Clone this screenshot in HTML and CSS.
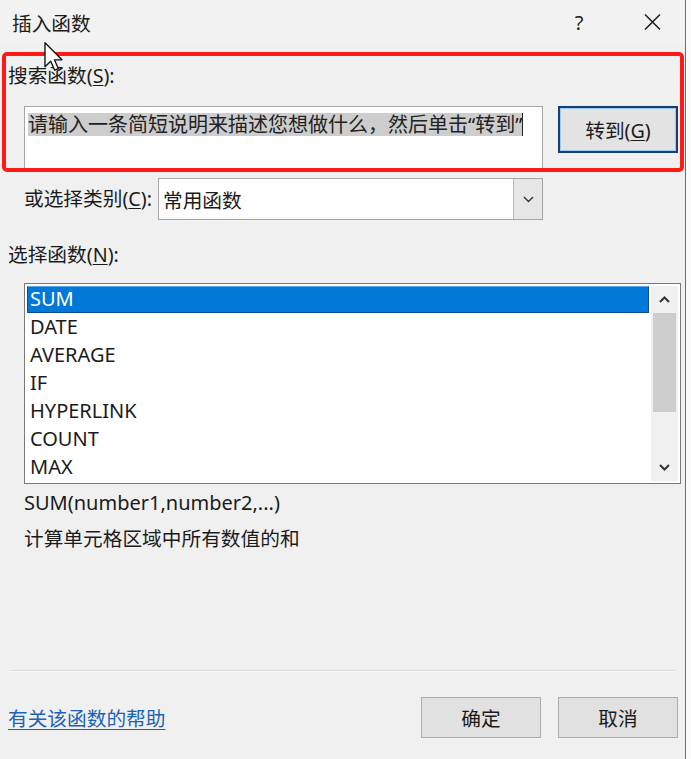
FILE: index.html
```html
<!DOCTYPE html>
<html lang="zh-CN">
<head>
<meta charset="utf-8">
<title>插入函数</title>
<link rel="stylesheet" href="styles.css">
</head>
<body>
<div class="dialog">
  <div class="titlebar">
    <span class="title">插入函数</span>
    <span class="help">?</span>
    <span class="close"><svg width="17" height="16" viewBox="0 0 17 16"><path d="M1 0.5 L16 15.5 M16 0.5 L1 15.5" stroke="#222" stroke-width="1.5" fill="none"/></svg></span>
  </div>

  <div class="label search-label">搜索函数(<u>S</u>):</div>
  <div class="search-row">
    <div class="search-box"><span class="sel">请输入一条简短说明来描述您想做什么，然后单击“转到”</span><span class="caret"></span></div>
    <button class="btn btn-go">转到(<u>G</u>)</button>
  </div>

  <div class="category-row">
    <span class="label cat-label">或选择类别(<u>C</u>):</span>
    <div class="select">
      <span class="select-value">常用函数</span>
      <span class="select-btn"><svg width="11" height="7" viewBox="0 0 11 7"><path d="M1 1 L5.5 5.5 L10 1" stroke="#333" stroke-width="1.4" fill="none"/></svg></span>
    </div>
  </div>

  <div class="label fn-label">选择函数(<u>N</u>):</div>
  <div class="listbox">
    <ul class="items">
      <li class="item selected">SUM</li>
      <li class="item">DATE</li>
      <li class="item">AVERAGE</li>
      <li class="item">IF</li>
      <li class="item">HYPERLINK</li>
      <li class="item">COUNT</li>
      <li class="item">MAX</li>
    </ul>
    <div class="scrollbar">
      <span class="arrow"><svg width="11" height="7" viewBox="0 0 11 7"><path d="M1 6 L5.5 1.5 L10 6" stroke="#333" stroke-width="2" fill="none"/></svg></span>
      <span class="thumb"></span>
      <span class="track"></span>
      <span class="arrow"><svg width="11" height="7" viewBox="0 0 11 7"><path d="M1 1 L5.5 5.5 L10 1" stroke="#333" stroke-width="2" fill="none"/></svg></span>
    </div>
  </div>

  <div class="syntax">SUM(number1,number2,...)</div>
  <div class="desc">计算单元格区域中所有数值的和</div>

  <div class="separator"></div>
  <div class="footer">
    <a class="help-link" href="#">有关该函数的帮助</a>
    <div class="buttons">
      <button class="btn">确定</button>
      <button class="btn">取消</button>
    </div>
  </div>

  <div class="annotation"></div>
  <svg class="cursor" width="20" height="30" viewBox="0 0 13 20"><path d="M0.5 0.5 L0.5 16.5 L4.3 12.8 L7 18.8 L9.4 17.8 L6.8 11.9 L11.8 11.9 Z" fill="#fff" stroke="#111" stroke-width="0.9" stroke-linejoin="round"/></svg>
</div>
</body>
</html>
```

FILE: styles.css
```css
* { box-sizing: border-box; }
html, body { margin: 0; padding: 0; background: #fbfbfb; }
body {
  font-family: "Noto Sans", "Noto Sans CJK SC", sans-serif;
  font-size: 19.7px;
  color: #1b1b1b;
}
.dialog {
  position: relative;
  width: 686px;
  height: 759px;
  background: #f0f0f0;
  border-right: 1px solid #6e6e6e;
  display: flex;
  flex-direction: column;
  padding-bottom: 21px;
  overflow: hidden;
}
.titlebar {
  height: 44px;
  display: flex;
  align-items: center;
  padding-left: 12px;
  background: #f2f2f2;
}
.title { flex: 1; }
.help { width: 20px; text-align: center; font-size: 20px; }
.close { margin-left: 55px; margin-right: 24px; display: flex; }
.label { line-height: 24px; }
u { text-decoration-thickness: 1px; text-underline-offset: 2px; }
.search-label { margin-top: 20px; padding-left: 8px; }
.search-row {
  margin-top: 18px;
  padding-left: 24px;
  display: flex;
  align-items: flex-start;
}
.search-box {
  width: 519px;
  height: 66px;
  background: #fff;
  border: 1px solid #a6a6a6;
  padding: 6px 0 0 3px;
  display: flex;
  align-items: flex-start;
  white-space: nowrap;
}
.sel {
  background: #cdcdcd;
  line-height: 23px;
  font-size: 20px;
  color: #222;
}
.caret {
  width: 1px;
  height: 23px;
  background: #222;
}
.btn {
  font-family: inherit;
  font-size: 19.7px;
  color: #1b1b1b;
  background: #e1e1e1;
  border: 1px solid #adadad;
  width: 120px;
  height: 41px;
  padding: 0;
}
.btn-go {
  margin-left: 15px;
  height: 47px;
  border: 2px solid #163f73;
  box-shadow: inset 0 0 0 1px #9ccbf2;
  background: #e3e3e3;
}
.category-row {
  margin-top: 6px;
  padding-left: 24px;
  display: flex;
  align-items: center;
}
.cat-label { width: 134px; }
.select {
  width: 385px;
  height: 42px;
  background: #fff;
  border: 1px solid #a6a6a6;
  display: flex;
  align-items: stretch;
}
.select-value { flex: 1; padding-left: 4px; display: flex; align-items: center; }
.select-btn {
  width: 29px;
  background: #e6e6e6;
  border-left: 1px solid #b8b8b8;
  display: flex;
  align-items: center;
  justify-content: center;
}
.fn-label { margin-top: 23px; padding-left: 8px; }
.listbox {
  margin-top: 16px;
  margin-left: 24px;
  width: 657px;
  height: 201px;
  background: #fff;
  border: 1px solid #7a7a7a;
  padding: 2px;
  display: flex;
}
.items { list-style: none; margin: 0; padding: 0; flex: 1; }
.item {
  height: 28px;
  line-height: 25px;
  padding-left: 3px;
  font-size: 20px;
}
.item.selected {
  height: 27px;
  line-height: 24px;
  background: #0078d7;
  color: #fff;
  border: 1px solid #0f4c8f;
  border-top-color: #5aa6e6;
  padding-left: 2px;
  margin-bottom: 1px;
}
.scrollbar {
  width: 27px;
  margin-left: 2px;
  background: #f0f0f0;
  display: flex;
  flex-direction: column;
}
.arrow {
  height: 27px;
  display: flex;
  align-items: center;
  justify-content: center;
}
.thumb { height: 99px; background: #cdcdcd; margin: 0 2px; }
.track { flex: 1; }
.syntax { margin-top: 7px; padding-left: 24px; line-height: 24px; font-size: 20px; }
.desc { margin-top: 12px; padding-left: 24px; line-height: 24px; }
.separator {
  margin: auto 10px 0;
  height: 2px;
  border-top: 1px solid #dcdcdc;
  border-bottom: 1px solid #f8f8f8;
}
.footer {
  margin-top: 25px;
  display: flex;
  align-items: center;
  padding: 0 7px 0 8px;
}
.help-link {
  color: #1a63b8;
  text-decoration: underline;
  text-underline-offset: 3px;
}
.buttons { margin-left: auto; display: flex; gap: 17px; }
.annotation {
  position: absolute;
  left: 2px;
  top: 52px;
  width: 682px;
  height: 120px;
  border: 4px solid #ff1a1a;
  border-radius: 5px;
}
.cursor { position: absolute; left: 44px; top: 42px; }
```
